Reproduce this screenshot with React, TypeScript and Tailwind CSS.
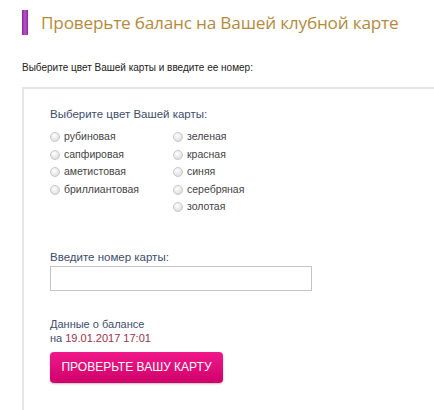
import React from "react";

const col1 = ["рубиновая", "сапфировая", "аметистовая", "бриллиантовая"];
const col2 = ["зеленая", "красная", "синяя", "серебряная", "золотая"];

function Radio({ label }: { label: string }) {
  return (
    <label className="flex items-center h-[17.5px] gap-[4px]">
      <span className="w-[10px] h-[10px] rounded-full border border-[#c8c8c8] bg-[radial-gradient(circle_at_40%_35%,#ffffff,#d4d4d4)] shrink-0" />
      <span className="text-[10.5px] text-[#444]">{label}</span>
    </label>
  );
}

export default function App() {
  return (
    <div className="w-[434px] h-[410px] bg-white overflow-hidden font-['Liberation_Sans',Arial,sans-serif]">
      <div className="flex items-center pt-[10px] pl-[22px] gap-[13px]">
        <div className="w-[6px] h-[25px] bg-gradient-to-r from-[#8a2a9a] via-[#c050d0] to-[#8a2a9a]" />
        <h1 className="text-[17.2px] text-[#b58a3c] font-['Open_Sans',sans-serif] leading-none tracking-[-0.2px]">
          Проверьте баланс на Вашей клубной карте
        </h1>
      </div>
      <p className="pl-[22px] mt-[28px] text-[10px] text-[#222] leading-none">
        Выберите цвет Вашей карты и введите ее номер:
      </p>
      <div className="mt-[14px] ml-[22px] border-l-2 border-t-2 border-[#e6e6e6] h-[400px] pl-[26px] pt-[20px]">
        <div className="text-[11.5px] text-[#3d4d6d] leading-none">Выберите цвет Вашей карты:</div>
        <div className="flex mt-[8px]">
          <div className="w-[123px] flex flex-col">
            {col1.map((l) => (
              <Radio key={l} label={l} />
            ))}
          </div>
          <div className="flex flex-col">
            {col2.map((l) => (
              <Radio key={l} label={l} />
            ))}
          </div>
        </div>
        <div className="mt-[36px] text-[11.5px] text-[#3d4d6d] leading-none">Введите номер карты:</div>
        <div className="mt-[2px] w-[262px] h-[25px] border border-[#c4c4c4] bg-white" />
        <div className="mt-[26px] text-[11px] text-[#3d4d6d] leading-[14px]">
          Данные о балансе
          <br />
          на <span className="text-[#a0304a]">19.01.2017 17:01</span>
        </div>
        <button className="mt-[7px] w-[173px] h-[31px] rounded-[4px] bg-gradient-to-b from-[#f0188a] to-[#d0006a] text-white text-[12px] shadow-[0_1px_2px_rgba(0,0,0,0.25)]">
          ПРОВЕРЬТЕ ВАШУ КАРТУ
        </button>
      </div>
    </div>
  );
}
